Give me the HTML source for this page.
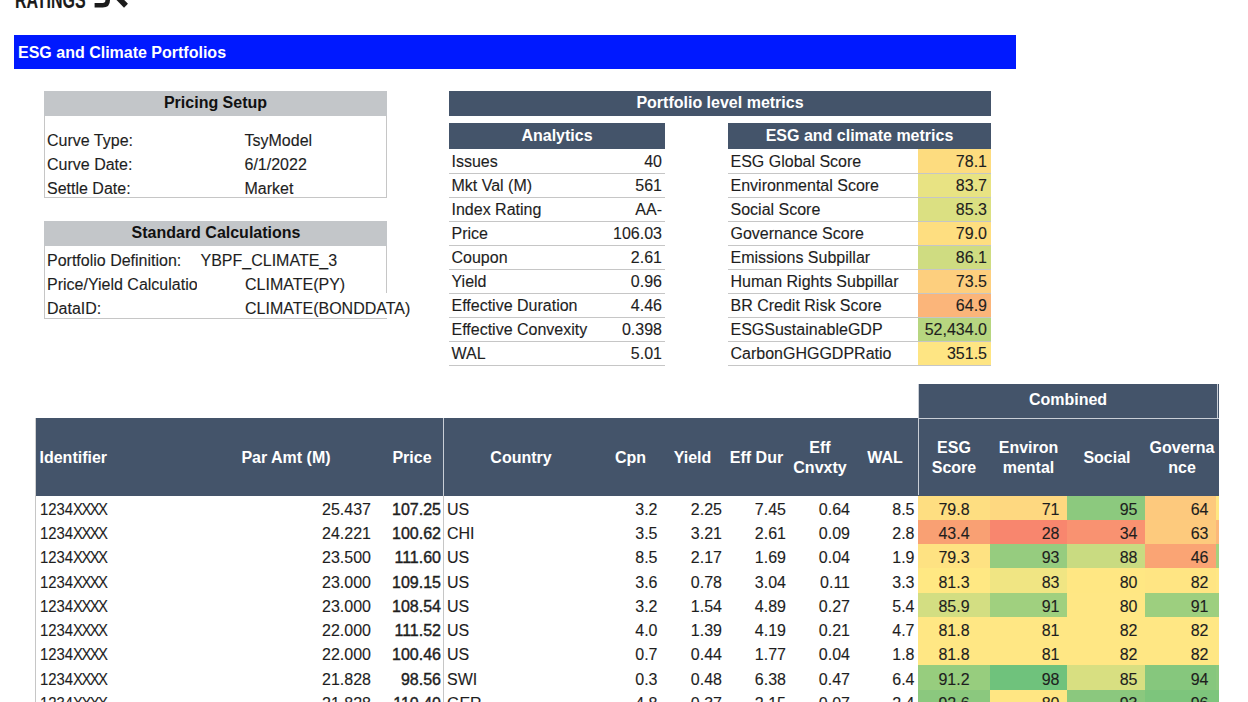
<!DOCTYPE html>
<html><head><meta charset="utf-8"><style>
html,body{margin:0;padding:0;background:#fff;}
body{width:1248px;height:702px;overflow:hidden;position:relative;font-family:"Liberation Sans",sans-serif;}
.t{position:absolute;white-space:nowrap;line-height:20px;-webkit-text-stroke:0.12px currentColor;}
.b{-webkit-text-stroke:0;}
.r{position:absolute;}
</style></head><body>
<div class="t" style="left:15px;top:-10px;font-size:24px;font-weight:700;color:#1b1b1b;transform:scaleX(0.665);transform-origin:0 0;line-height:20px;letter-spacing:0px">RATINGS</div>
<svg class="r" style="left:92px;top:-6px" width="40" height="16" viewBox="0 0 40 16"><path d="M15.7 0 L15.7 6.3 Q15.7 11.3 10.7 11.3 L2.6 11.3" fill="none" stroke="#1b1b1b" stroke-width="4.6"/><path d="M21.5 -1 L34 11.7" fill="none" stroke="#1b1b1b" stroke-width="5.5"/></svg>
<div class="r" style="left:14px;top:35px;width:1002px;height:34px;background:#0019ff;"></div>
<div class="t b" style="left:18px;top:43.00px;font-size:16px;font-weight:700;color:#fff;">ESG and Climate Portfolios</div>
<div class="r" style="left:44px;top:91px;width:343px;height:25px;background:#c3c6c9;"></div>
<div class="r" style="left:44px;top:116px;width:1px;height:82px;background:#c6c6c6;"></div>
<div class="r" style="left:386px;top:116px;width:1px;height:82px;background:#c6c6c6;"></div>
<div class="r" style="left:44px;top:197px;width:343px;height:1px;background:#c6c6c6;"></div>
<div class="t b" style="left:15.5px;width:400px;text-align:center;top:93.00px;font-size:16px;font-weight:700;color:#111;">Pricing Setup</div>
<div class="t" style="left:47px;top:131.00px;font-size:16px;font-weight:400;color:#1e1e1e;">Curve Type:</div>
<div class="t" style="left:244.5px;top:131.00px;font-size:16px;font-weight:400;color:#1e1e1e;">TsyModel</div>
<div class="t" style="left:47px;top:155.00px;font-size:16px;font-weight:400;color:#1e1e1e;">Curve Date:</div>
<div class="t" style="left:244.5px;top:155.00px;font-size:16px;font-weight:400;color:#1e1e1e;">6/1/2022</div>
<div class="t" style="left:47px;top:179.00px;font-size:16px;font-weight:400;color:#1e1e1e;">Settle Date:</div>
<div class="t" style="left:244.5px;top:179.00px;font-size:16px;font-weight:400;color:#1e1e1e;">Market</div>
<div class="r" style="left:44px;top:221px;width:343px;height:25px;background:#c3c6c9;"></div>
<div class="r" style="left:44px;top:246px;width:1px;height:73px;background:#c6c6c6;"></div>
<div class="r" style="left:386px;top:246px;width:1px;height:47px;background:#c6c6c6;"></div>
<div class="r" style="left:44px;top:318px;width:343px;height:1px;background:#c6c6c6;"></div>
<div class="t b" style="left:16px;width:400px;text-align:center;top:223.00px;font-size:16px;font-weight:700;color:#111;">Standard Calculations</div>
<div class="t" style="left:47px;top:251.00px;font-size:16px;font-weight:400;color:#1e1e1e;">Portfolio Definition:</div>
<div class="t" style="left:200.5px;top:251.00px;font-size:16px;font-weight:400;color:#1e1e1e;">YBPF_CLIMATE_3</div>
<div class="t" style="left:47px;top:275.00px;font-size:16px;font-weight:400;color:#1e1e1e;"><span style="display:inline-block;width:150px;overflow:hidden;white-space:nowrap;vertical-align:top">Price/Yield Calculation</span></div>
<div class="t" style="left:245px;top:275.00px;font-size:16px;font-weight:400;color:#1e1e1e;">CLIMATE(PY)</div>
<div class="t" style="left:47px;top:299.00px;font-size:16px;font-weight:400;color:#1e1e1e;">DataID:</div>
<div class="t" style="left:245px;top:299.00px;font-size:16px;font-weight:400;color:#1e1e1e;">CLIMATE(BONDDATA)</div>
<div class="r" style="left:449px;top:91px;width:542px;height:25px;background:#44546a;"></div>
<div class="t b" style="left:520px;width:400px;text-align:center;top:93.00px;font-size:16px;font-weight:700;color:#fff;">Portfolio level metrics</div>
<div class="r" style="left:449px;top:123px;width:216px;height:26px;background:#44546a;"></div>
<div class="t b" style="left:357px;width:400px;text-align:center;top:126.00px;font-size:16px;font-weight:700;color:#fff;">Analytics</div>
<div class="r" style="left:728px;top:123px;width:263px;height:26px;background:#44546a;"></div>
<div class="t b" style="left:659.5px;width:400px;text-align:center;top:126.00px;font-size:16px;font-weight:700;color:#fff;">ESG and climate metrics</div>
<div class="r" style="left:449px;top:173px;width:216px;height:1px;background:#c6c6c6;"></div>
<div class="t" style="left:451.5px;top:152.00px;font-size:16px;font-weight:400;color:#1e1e1e;">Issues</div>
<div class="t" style="left:262px;width:400px;text-align:right;top:152.00px;font-size:16px;font-weight:400;color:#1e1e1e;">40</div>
<div class="r" style="left:918px;top:149px;width:73px;height:24px;background:#fddc7f;"></div>
<div class="r" style="left:728px;top:173px;width:263px;height:1px;background:#c6c6c6;z-index:2"></div>
<div class="t" style="left:730.5px;top:152.00px;font-size:16px;font-weight:400;color:#1e1e1e;">ESG Global Score</div>
<div class="t" style="left:587px;width:400px;text-align:right;top:152.00px;font-size:16px;font-weight:400;color:#1e1e1e;">78.1</div>
<div class="r" style="left:449px;top:197px;width:216px;height:1px;background:#c6c6c6;"></div>
<div class="t" style="left:451.5px;top:176.00px;font-size:16px;font-weight:400;color:#1e1e1e;">Mkt Val (M)</div>
<div class="t" style="left:262px;width:400px;text-align:right;top:176.00px;font-size:16px;font-weight:400;color:#1e1e1e;">561</div>
<div class="r" style="left:918px;top:173px;width:73px;height:24px;background:#e8e383;"></div>
<div class="r" style="left:728px;top:197px;width:263px;height:1px;background:#c6c6c6;z-index:2"></div>
<div class="t" style="left:730.5px;top:176.00px;font-size:16px;font-weight:400;color:#1e1e1e;">Environmental Score</div>
<div class="t" style="left:587px;width:400px;text-align:right;top:176.00px;font-size:16px;font-weight:400;color:#1e1e1e;">83.7</div>
<div class="r" style="left:449px;top:221px;width:216px;height:1px;background:#c6c6c6;"></div>
<div class="t" style="left:451.5px;top:200.00px;font-size:16px;font-weight:400;color:#1e1e1e;">Index Rating</div>
<div class="t" style="left:262px;width:400px;text-align:right;top:200.00px;font-size:16px;font-weight:400;color:#1e1e1e;">AA-</div>
<div class="r" style="left:918px;top:197px;width:73px;height:24px;background:#dbe082;"></div>
<div class="r" style="left:728px;top:221px;width:263px;height:1px;background:#c6c6c6;z-index:2"></div>
<div class="t" style="left:730.5px;top:200.00px;font-size:16px;font-weight:400;color:#1e1e1e;">Social Score</div>
<div class="t" style="left:587px;width:400px;text-align:right;top:200.00px;font-size:16px;font-weight:400;color:#1e1e1e;">85.3</div>
<div class="r" style="left:449px;top:245px;width:216px;height:1px;background:#c6c6c6;"></div>
<div class="t" style="left:451.5px;top:224.00px;font-size:16px;font-weight:400;color:#1e1e1e;">Price</div>
<div class="t" style="left:262px;width:400px;text-align:right;top:224.00px;font-size:16px;font-weight:400;color:#1e1e1e;">106.03</div>
<div class="r" style="left:918px;top:221px;width:73px;height:24px;background:#fede80;"></div>
<div class="r" style="left:728px;top:245px;width:263px;height:1px;background:#c6c6c6;z-index:2"></div>
<div class="t" style="left:730.5px;top:224.00px;font-size:16px;font-weight:400;color:#1e1e1e;">Governance Score</div>
<div class="t" style="left:587px;width:400px;text-align:right;top:224.00px;font-size:16px;font-weight:400;color:#1e1e1e;">79.0</div>
<div class="r" style="left:449px;top:269px;width:216px;height:1px;background:#c6c6c6;"></div>
<div class="t" style="left:451.5px;top:248.00px;font-size:16px;font-weight:400;color:#1e1e1e;">Coupon</div>
<div class="t" style="left:262px;width:400px;text-align:right;top:248.00px;font-size:16px;font-weight:400;color:#1e1e1e;">2.61</div>
<div class="r" style="left:918px;top:245px;width:73px;height:24px;background:#cfdc81;"></div>
<div class="r" style="left:728px;top:269px;width:263px;height:1px;background:#c6c6c6;z-index:2"></div>
<div class="t" style="left:730.5px;top:248.00px;font-size:16px;font-weight:400;color:#1e1e1e;">Emissions Subpillar</div>
<div class="t" style="left:587px;width:400px;text-align:right;top:248.00px;font-size:16px;font-weight:400;color:#1e1e1e;">86.1</div>
<div class="r" style="left:449px;top:293px;width:216px;height:1px;background:#c6c6c6;"></div>
<div class="t" style="left:451.5px;top:272.00px;font-size:16px;font-weight:400;color:#1e1e1e;">Yield</div>
<div class="t" style="left:262px;width:400px;text-align:right;top:272.00px;font-size:16px;font-weight:400;color:#1e1e1e;">0.96</div>
<div class="r" style="left:918px;top:269px;width:73px;height:24px;background:#fdcf7e;"></div>
<div class="r" style="left:728px;top:293px;width:263px;height:1px;background:#c6c6c6;z-index:2"></div>
<div class="t" style="left:730.5px;top:272.00px;font-size:16px;font-weight:400;color:#1e1e1e;">Human Rights Subpillar</div>
<div class="t" style="left:587px;width:400px;text-align:right;top:272.00px;font-size:16px;font-weight:400;color:#1e1e1e;">73.5</div>
<div class="r" style="left:449px;top:317px;width:216px;height:1px;background:#c6c6c6;"></div>
<div class="t" style="left:451.5px;top:296.00px;font-size:16px;font-weight:400;color:#1e1e1e;">Effective Duration</div>
<div class="t" style="left:262px;width:400px;text-align:right;top:296.00px;font-size:16px;font-weight:400;color:#1e1e1e;">4.46</div>
<div class="r" style="left:918px;top:293px;width:73px;height:24px;background:#fbb57a;"></div>
<div class="r" style="left:728px;top:317px;width:263px;height:1px;background:#c6c6c6;z-index:2"></div>
<div class="t" style="left:730.5px;top:296.00px;font-size:16px;font-weight:400;color:#1e1e1e;">BR Credit Risk Score</div>
<div class="t" style="left:587px;width:400px;text-align:right;top:296.00px;font-size:16px;font-weight:400;color:#1e1e1e;">64.9</div>
<div class="r" style="left:449px;top:341px;width:216px;height:1px;background:#c6c6c6;"></div>
<div class="t" style="left:451.5px;top:320.00px;font-size:16px;font-weight:400;color:#1e1e1e;">Effective Convexity</div>
<div class="t" style="left:262px;width:400px;text-align:right;top:320.00px;font-size:16px;font-weight:400;color:#1e1e1e;">0.398</div>
<div class="r" style="left:918px;top:317px;width:73px;height:24px;background:#b7d680;"></div>
<div class="r" style="left:728px;top:341px;width:263px;height:1px;background:#c6c6c6;z-index:2"></div>
<div class="t" style="left:730.5px;top:320.00px;font-size:16px;font-weight:400;color:#1e1e1e;">ESGSustainableGDP</div>
<div class="t" style="left:587px;width:400px;text-align:right;top:320.00px;font-size:16px;font-weight:400;color:#1e1e1e;">52,434.0</div>
<div class="r" style="left:449px;top:365px;width:216px;height:1px;background:#c6c6c6;"></div>
<div class="t" style="left:451.5px;top:344.00px;font-size:16px;font-weight:400;color:#1e1e1e;">WAL</div>
<div class="t" style="left:262px;width:400px;text-align:right;top:344.00px;font-size:16px;font-weight:400;color:#1e1e1e;">5.01</div>
<div class="r" style="left:918px;top:341px;width:73px;height:24px;background:#fee583;"></div>
<div class="r" style="left:728px;top:365px;width:263px;height:1px;background:#c6c6c6;z-index:2"></div>
<div class="t" style="left:730.5px;top:344.00px;font-size:16px;font-weight:400;color:#1e1e1e;">CarbonGHGGDPRatio</div>
<div class="t" style="left:587px;width:400px;text-align:right;top:344.00px;font-size:16px;font-weight:400;color:#1e1e1e;">351.5</div>
<div class="r" style="left:918px;top:384px;width:301px;height:34px;background:#44546a;"></div>
<div class="t b" style="left:868px;width:400px;text-align:center;top:390.00px;font-size:16px;font-weight:700;color:#fff;">Combined</div>
<div class="r" style="left:36px;top:418px;width:1183px;height:77.5px;background:#44546a;"></div>
<div class="r" style="left:35px;top:418px;width:1px;height:78px;background:#d0d0d0;"></div>
<div class="r" style="left:918px;top:418px;width:301px;height:1px;background:#c9ced6;"></div>
<div class="r" style="left:918px;top:384px;width:1px;height:111px;background:#c9ced6;"></div>
<div class="r" style="left:1217px;top:384px;width:1px;height:34px;background:#c9ced6;"></div>
<div class="r" style="left:443px;top:418px;width:1px;height:77px;background:#c9ced6;"></div>
<div class="t b" style="left:39.5px;top:448.00px;font-size:16px;font-weight:700;color:#fff;">Identifier</div>
<div class="t b" style="left:86px;width:400px;text-align:center;top:448.00px;font-size:16px;font-weight:700;color:#fff;">Par Amt (M)</div>
<div class="t b" style="left:212px;width:400px;text-align:center;top:448.00px;font-size:16px;font-weight:700;color:#fff;">Price</div>
<div class="t b" style="left:321px;width:400px;text-align:center;top:448.00px;font-size:16px;font-weight:700;color:#fff;">Country</div>
<div class="t b" style="left:430.5px;width:400px;text-align:center;top:448.00px;font-size:16px;font-weight:700;color:#fff;">Cpn</div>
<div class="t b" style="left:492.5px;width:400px;text-align:center;top:448.00px;font-size:16px;font-weight:700;color:#fff;">Yield</div>
<div class="t b" style="left:556.5px;width:400px;text-align:center;top:448.00px;font-size:16px;font-weight:700;color:#fff;">Eff Dur</div>
<div class="t b" style="left:620px;width:400px;text-align:center;top:438.00px;font-size:16px;font-weight:700;color:#fff;">Eff</div>
<div class="t b" style="left:620px;width:400px;text-align:center;top:458.00px;font-size:16px;font-weight:700;color:#fff;">Cnvxty</div>
<div class="t b" style="left:685px;width:400px;text-align:center;top:448.00px;font-size:16px;font-weight:700;color:#fff;">WAL</div>
<div class="t b" style="left:754px;width:400px;text-align:center;top:438.00px;font-size:16px;font-weight:700;color:#fff;">ESG</div>
<div class="t b" style="left:754px;width:400px;text-align:center;top:458.00px;font-size:16px;font-weight:700;color:#fff;">Score</div>
<div class="t b" style="left:828.5px;width:400px;text-align:center;top:438.00px;font-size:16px;font-weight:700;color:#fff;">Environ</div>
<div class="t b" style="left:828.5px;width:400px;text-align:center;top:458.00px;font-size:16px;font-weight:700;color:#fff;">mental</div>
<div class="t b" style="left:907px;width:400px;text-align:center;top:448.00px;font-size:16px;font-weight:700;color:#fff;">Social</div>
<div class="t b" style="left:982px;width:400px;text-align:center;top:438.00px;font-size:16px;font-weight:700;color:#fff;">Governa</div>
<div class="t b" style="left:982px;width:400px;text-align:center;top:458.00px;font-size:16px;font-weight:700;color:#fff;">nce</div>
<div class="r" style="left:35px;top:495px;width:1px;height:210px;background:#c6c6c6;"></div>
<div class="r" style="left:443px;top:495px;width:1px;height:210px;background:#c6c6c6;"></div>
<div class="r" style="left:918px;top:495.50px;width:71.5px;height:24.25px;background:#fede81"></div>
<div class="r" style="left:989.5px;top:495.50px;width:77.5px;height:24.25px;background:#fed880"></div>
<div class="r" style="left:1067px;top:495.50px;width:78px;height:24.25px;background:#8cc97e"></div>
<div class="r" style="left:1145px;top:495.50px;width:71px;height:24.25px;background:#fdc97d"></div>
<div class="r" style="left:1216px;top:495.50px;width:3px;height:24.25px;background:#fee783"></div>
<div class="t" style="left:40px;top:500.00px;font-size:16px;font-weight:400;color:#1e1e1e;"><span style="display:inline-block;transform:scaleX(0.93);transform-origin:0 0">1234<span style="letter-spacing:-1.75px">XXXX</span></span></div>
<div class="t" style="left:-29px;width:400px;text-align:right;top:500.00px;font-size:16px;font-weight:400;color:#1e1e1e;">25.437</div>
<div class="t" style="left:41px;width:400px;text-align:right;top:500.00px;font-size:16px;font-weight:400;color:#1e1e1e;-webkit-text-stroke:0.4px currentColor">107.25</div>
<div class="t" style="left:447px;top:500.00px;font-size:16px;font-weight:400;color:#1e1e1e;">US</div>
<div class="t" style="left:257.5px;width:400px;text-align:right;top:500.00px;font-size:16px;font-weight:400;color:#1e1e1e;">3.2</div>
<div class="t" style="left:322px;width:400px;text-align:right;top:500.00px;font-size:16px;font-weight:400;color:#1e1e1e;">2.25</div>
<div class="t" style="left:386px;width:400px;text-align:right;top:500.00px;font-size:16px;font-weight:400;color:#1e1e1e;">7.45</div>
<div class="t" style="left:450px;width:400px;text-align:right;top:500.00px;font-size:16px;font-weight:400;color:#1e1e1e;">0.64</div>
<div class="t" style="left:514.5px;width:400px;text-align:right;top:500.00px;font-size:16px;font-weight:400;color:#1e1e1e;">8.5</div>
<div class="t" style="left:754px;width:400px;text-align:center;top:500.00px;font-size:16px;font-weight:400;color:#1e1e1e;">79.8</div>
<div class="t" style="left:659.5px;width:400px;text-align:right;top:500.00px;font-size:16px;font-weight:400;color:#1e1e1e;">71</div>
<div class="t" style="left:737.5px;width:400px;text-align:right;top:500.00px;font-size:16px;font-weight:400;color:#1e1e1e;">95</div>
<div class="t" style="left:808.5px;width:400px;text-align:right;top:500.00px;font-size:16px;font-weight:400;color:#1e1e1e;">64</div>
<div class="r" style="left:918px;top:519.75px;width:71.5px;height:24.25px;background:#f9a073"></div>
<div class="r" style="left:989.5px;top:519.75px;width:77.5px;height:24.25px;background:#f8866e"></div>
<div class="r" style="left:1067px;top:519.75px;width:78px;height:24.25px;background:#f99271"></div>
<div class="r" style="left:1145px;top:519.75px;width:71px;height:24.25px;background:#fdca7d"></div>
<div class="r" style="left:1216px;top:519.75px;width:3px;height:24.25px;background:#fcb87a"></div>
<div class="t" style="left:40px;top:524.00px;font-size:16px;font-weight:400;color:#1e1e1e;"><span style="display:inline-block;transform:scaleX(0.93);transform-origin:0 0">1234<span style="letter-spacing:-1.75px">XXXX</span></span></div>
<div class="t" style="left:-29px;width:400px;text-align:right;top:524.00px;font-size:16px;font-weight:400;color:#1e1e1e;">24.221</div>
<div class="t" style="left:41px;width:400px;text-align:right;top:524.00px;font-size:16px;font-weight:400;color:#1e1e1e;-webkit-text-stroke:0.4px currentColor">100.62</div>
<div class="t" style="left:447px;top:524.00px;font-size:16px;font-weight:400;color:#1e1e1e;">CHI</div>
<div class="t" style="left:257.5px;width:400px;text-align:right;top:524.00px;font-size:16px;font-weight:400;color:#1e1e1e;">3.5</div>
<div class="t" style="left:322px;width:400px;text-align:right;top:524.00px;font-size:16px;font-weight:400;color:#1e1e1e;">3.21</div>
<div class="t" style="left:386px;width:400px;text-align:right;top:524.00px;font-size:16px;font-weight:400;color:#1e1e1e;">2.61</div>
<div class="t" style="left:450px;width:400px;text-align:right;top:524.00px;font-size:16px;font-weight:400;color:#1e1e1e;">0.09</div>
<div class="t" style="left:514.5px;width:400px;text-align:right;top:524.00px;font-size:16px;font-weight:400;color:#1e1e1e;">2.8</div>
<div class="t" style="left:754px;width:400px;text-align:center;top:524.00px;font-size:16px;font-weight:400;color:#1e1e1e;">43.4</div>
<div class="t" style="left:659.5px;width:400px;text-align:right;top:524.00px;font-size:16px;font-weight:400;color:#1e1e1e;">28</div>
<div class="t" style="left:737.5px;width:400px;text-align:right;top:524.00px;font-size:16px;font-weight:400;color:#1e1e1e;">34</div>
<div class="t" style="left:808.5px;width:400px;text-align:right;top:524.00px;font-size:16px;font-weight:400;color:#1e1e1e;">63</div>
<div class="r" style="left:918px;top:544.00px;width:71.5px;height:24.25px;background:#fee282"></div>
<div class="r" style="left:989.5px;top:544.00px;width:77.5px;height:24.25px;background:#96cc7f"></div>
<div class="r" style="left:1067px;top:544.00px;width:78px;height:24.25px;background:#c9db81"></div>
<div class="r" style="left:1145px;top:544.00px;width:71px;height:24.25px;background:#faa474"></div>
<div class="r" style="left:1216px;top:544.00px;width:3px;height:24.25px;background:#a5d17f"></div>
<div class="t" style="left:40px;top:548.00px;font-size:16px;font-weight:400;color:#1e1e1e;"><span style="display:inline-block;transform:scaleX(0.93);transform-origin:0 0">1234<span style="letter-spacing:-1.75px">XXXX</span></span></div>
<div class="t" style="left:-29px;width:400px;text-align:right;top:548.00px;font-size:16px;font-weight:400;color:#1e1e1e;">23.500</div>
<div class="t" style="left:41px;width:400px;text-align:right;top:548.00px;font-size:16px;font-weight:400;color:#1e1e1e;-webkit-text-stroke:0.4px currentColor">111.60</div>
<div class="t" style="left:447px;top:548.00px;font-size:16px;font-weight:400;color:#1e1e1e;">US</div>
<div class="t" style="left:257.5px;width:400px;text-align:right;top:548.00px;font-size:16px;font-weight:400;color:#1e1e1e;">8.5</div>
<div class="t" style="left:322px;width:400px;text-align:right;top:548.00px;font-size:16px;font-weight:400;color:#1e1e1e;">2.17</div>
<div class="t" style="left:386px;width:400px;text-align:right;top:548.00px;font-size:16px;font-weight:400;color:#1e1e1e;">1.69</div>
<div class="t" style="left:450px;width:400px;text-align:right;top:548.00px;font-size:16px;font-weight:400;color:#1e1e1e;">0.04</div>
<div class="t" style="left:514.5px;width:400px;text-align:right;top:548.00px;font-size:16px;font-weight:400;color:#1e1e1e;">1.9</div>
<div class="t" style="left:754px;width:400px;text-align:center;top:548.00px;font-size:16px;font-weight:400;color:#1e1e1e;">79.3</div>
<div class="t" style="left:659.5px;width:400px;text-align:right;top:548.00px;font-size:16px;font-weight:400;color:#1e1e1e;">93</div>
<div class="t" style="left:737.5px;width:400px;text-align:right;top:548.00px;font-size:16px;font-weight:400;color:#1e1e1e;">88</div>
<div class="t" style="left:808.5px;width:400px;text-align:right;top:548.00px;font-size:16px;font-weight:400;color:#1e1e1e;">46</div>
<div class="r" style="left:918px;top:568.25px;width:71.5px;height:24.25px;background:#ffe883"></div>
<div class="r" style="left:989.5px;top:568.25px;width:77.5px;height:24.25px;background:#f0e583"></div>
<div class="r" style="left:1067px;top:568.25px;width:78px;height:24.25px;background:#ffe783"></div>
<div class="r" style="left:1145px;top:568.25px;width:71px;height:24.25px;background:#ffe583"></div>
<div class="r" style="left:1216px;top:568.25px;width:3px;height:24.25px;background:#ffe784"></div>
<div class="t" style="left:40px;top:573.00px;font-size:16px;font-weight:400;color:#1e1e1e;"><span style="display:inline-block;transform:scaleX(0.93);transform-origin:0 0">1234<span style="letter-spacing:-1.75px">XXXX</span></span></div>
<div class="t" style="left:-29px;width:400px;text-align:right;top:573.00px;font-size:16px;font-weight:400;color:#1e1e1e;">23.000</div>
<div class="t" style="left:41px;width:400px;text-align:right;top:573.00px;font-size:16px;font-weight:400;color:#1e1e1e;-webkit-text-stroke:0.4px currentColor">109.15</div>
<div class="t" style="left:447px;top:573.00px;font-size:16px;font-weight:400;color:#1e1e1e;">US</div>
<div class="t" style="left:257.5px;width:400px;text-align:right;top:573.00px;font-size:16px;font-weight:400;color:#1e1e1e;">3.6</div>
<div class="t" style="left:322px;width:400px;text-align:right;top:573.00px;font-size:16px;font-weight:400;color:#1e1e1e;">0.78</div>
<div class="t" style="left:386px;width:400px;text-align:right;top:573.00px;font-size:16px;font-weight:400;color:#1e1e1e;">3.04</div>
<div class="t" style="left:450px;width:400px;text-align:right;top:573.00px;font-size:16px;font-weight:400;color:#1e1e1e;">0.11</div>
<div class="t" style="left:514.5px;width:400px;text-align:right;top:573.00px;font-size:16px;font-weight:400;color:#1e1e1e;">3.3</div>
<div class="t" style="left:754px;width:400px;text-align:center;top:573.00px;font-size:16px;font-weight:400;color:#1e1e1e;">81.3</div>
<div class="t" style="left:659.5px;width:400px;text-align:right;top:573.00px;font-size:16px;font-weight:400;color:#1e1e1e;">83</div>
<div class="t" style="left:737.5px;width:400px;text-align:right;top:573.00px;font-size:16px;font-weight:400;color:#1e1e1e;">80</div>
<div class="t" style="left:808.5px;width:400px;text-align:right;top:573.00px;font-size:16px;font-weight:400;color:#1e1e1e;">82</div>
<div class="r" style="left:918px;top:592.50px;width:71.5px;height:24.25px;background:#d3de82"></div>
<div class="r" style="left:989.5px;top:592.50px;width:77.5px;height:24.25px;background:#a0d07f"></div>
<div class="r" style="left:1067px;top:592.50px;width:78px;height:24.25px;background:#ffe784"></div>
<div class="r" style="left:1145px;top:592.50px;width:71px;height:24.25px;background:#9dcf7f"></div>
<div class="r" style="left:1216px;top:592.50px;width:3px;height:24.25px;background:#9ecf7f"></div>
<div class="t" style="left:40px;top:597.00px;font-size:16px;font-weight:400;color:#1e1e1e;"><span style="display:inline-block;transform:scaleX(0.93);transform-origin:0 0">1234<span style="letter-spacing:-1.75px">XXXX</span></span></div>
<div class="t" style="left:-29px;width:400px;text-align:right;top:597.00px;font-size:16px;font-weight:400;color:#1e1e1e;">23.000</div>
<div class="t" style="left:41px;width:400px;text-align:right;top:597.00px;font-size:16px;font-weight:400;color:#1e1e1e;-webkit-text-stroke:0.4px currentColor">108.54</div>
<div class="t" style="left:447px;top:597.00px;font-size:16px;font-weight:400;color:#1e1e1e;">US</div>
<div class="t" style="left:257.5px;width:400px;text-align:right;top:597.00px;font-size:16px;font-weight:400;color:#1e1e1e;">3.2</div>
<div class="t" style="left:322px;width:400px;text-align:right;top:597.00px;font-size:16px;font-weight:400;color:#1e1e1e;">1.54</div>
<div class="t" style="left:386px;width:400px;text-align:right;top:597.00px;font-size:16px;font-weight:400;color:#1e1e1e;">4.89</div>
<div class="t" style="left:450px;width:400px;text-align:right;top:597.00px;font-size:16px;font-weight:400;color:#1e1e1e;">0.27</div>
<div class="t" style="left:514.5px;width:400px;text-align:right;top:597.00px;font-size:16px;font-weight:400;color:#1e1e1e;">5.4</div>
<div class="t" style="left:754px;width:400px;text-align:center;top:597.00px;font-size:16px;font-weight:400;color:#1e1e1e;">85.9</div>
<div class="t" style="left:659.5px;width:400px;text-align:right;top:597.00px;font-size:16px;font-weight:400;color:#1e1e1e;">91</div>
<div class="t" style="left:737.5px;width:400px;text-align:right;top:597.00px;font-size:16px;font-weight:400;color:#1e1e1e;">80</div>
<div class="t" style="left:808.5px;width:400px;text-align:right;top:597.00px;font-size:16px;font-weight:400;color:#1e1e1e;">91</div>
<div class="r" style="left:918px;top:616.75px;width:71.5px;height:24.25px;background:#ffe784"></div>
<div class="r" style="left:989.5px;top:616.75px;width:77.5px;height:24.25px;background:#ffe784"></div>
<div class="r" style="left:1067px;top:616.75px;width:78px;height:24.25px;background:#ffe784"></div>
<div class="r" style="left:1145px;top:616.75px;width:71px;height:24.25px;background:#ffe784"></div>
<div class="r" style="left:1216px;top:616.75px;width:3px;height:24.25px;background:#ffe784"></div>
<div class="t" style="left:40px;top:621.00px;font-size:16px;font-weight:400;color:#1e1e1e;"><span style="display:inline-block;transform:scaleX(0.93);transform-origin:0 0">1234<span style="letter-spacing:-1.75px">XXXX</span></span></div>
<div class="t" style="left:-29px;width:400px;text-align:right;top:621.00px;font-size:16px;font-weight:400;color:#1e1e1e;">22.000</div>
<div class="t" style="left:41px;width:400px;text-align:right;top:621.00px;font-size:16px;font-weight:400;color:#1e1e1e;-webkit-text-stroke:0.4px currentColor">111.52</div>
<div class="t" style="left:447px;top:621.00px;font-size:16px;font-weight:400;color:#1e1e1e;">US</div>
<div class="t" style="left:257.5px;width:400px;text-align:right;top:621.00px;font-size:16px;font-weight:400;color:#1e1e1e;">4.0</div>
<div class="t" style="left:322px;width:400px;text-align:right;top:621.00px;font-size:16px;font-weight:400;color:#1e1e1e;">1.39</div>
<div class="t" style="left:386px;width:400px;text-align:right;top:621.00px;font-size:16px;font-weight:400;color:#1e1e1e;">4.19</div>
<div class="t" style="left:450px;width:400px;text-align:right;top:621.00px;font-size:16px;font-weight:400;color:#1e1e1e;">0.21</div>
<div class="t" style="left:514.5px;width:400px;text-align:right;top:621.00px;font-size:16px;font-weight:400;color:#1e1e1e;">4.7</div>
<div class="t" style="left:754px;width:400px;text-align:center;top:621.00px;font-size:16px;font-weight:400;color:#1e1e1e;">81.8</div>
<div class="t" style="left:659.5px;width:400px;text-align:right;top:621.00px;font-size:16px;font-weight:400;color:#1e1e1e;">81</div>
<div class="t" style="left:737.5px;width:400px;text-align:right;top:621.00px;font-size:16px;font-weight:400;color:#1e1e1e;">82</div>
<div class="t" style="left:808.5px;width:400px;text-align:right;top:621.00px;font-size:16px;font-weight:400;color:#1e1e1e;">82</div>
<div class="r" style="left:918px;top:641.00px;width:71.5px;height:24.25px;background:#ffe784"></div>
<div class="r" style="left:989.5px;top:641.00px;width:77.5px;height:24.25px;background:#ffe784"></div>
<div class="r" style="left:1067px;top:641.00px;width:78px;height:24.25px;background:#ffe784"></div>
<div class="r" style="left:1145px;top:641.00px;width:71px;height:24.25px;background:#ffe784"></div>
<div class="r" style="left:1216px;top:641.00px;width:3px;height:24.25px;background:#ffe784"></div>
<div class="t" style="left:40px;top:645.00px;font-size:16px;font-weight:400;color:#1e1e1e;"><span style="display:inline-block;transform:scaleX(0.93);transform-origin:0 0">1234<span style="letter-spacing:-1.75px">XXXX</span></span></div>
<div class="t" style="left:-29px;width:400px;text-align:right;top:645.00px;font-size:16px;font-weight:400;color:#1e1e1e;">22.000</div>
<div class="t" style="left:41px;width:400px;text-align:right;top:645.00px;font-size:16px;font-weight:400;color:#1e1e1e;-webkit-text-stroke:0.4px currentColor">100.46</div>
<div class="t" style="left:447px;top:645.00px;font-size:16px;font-weight:400;color:#1e1e1e;">US</div>
<div class="t" style="left:257.5px;width:400px;text-align:right;top:645.00px;font-size:16px;font-weight:400;color:#1e1e1e;">0.7</div>
<div class="t" style="left:322px;width:400px;text-align:right;top:645.00px;font-size:16px;font-weight:400;color:#1e1e1e;">0.44</div>
<div class="t" style="left:386px;width:400px;text-align:right;top:645.00px;font-size:16px;font-weight:400;color:#1e1e1e;">1.77</div>
<div class="t" style="left:450px;width:400px;text-align:right;top:645.00px;font-size:16px;font-weight:400;color:#1e1e1e;">0.04</div>
<div class="t" style="left:514.5px;width:400px;text-align:right;top:645.00px;font-size:16px;font-weight:400;color:#1e1e1e;">1.8</div>
<div class="t" style="left:754px;width:400px;text-align:center;top:645.00px;font-size:16px;font-weight:400;color:#1e1e1e;">81.8</div>
<div class="t" style="left:659.5px;width:400px;text-align:right;top:645.00px;font-size:16px;font-weight:400;color:#1e1e1e;">81</div>
<div class="t" style="left:737.5px;width:400px;text-align:right;top:645.00px;font-size:16px;font-weight:400;color:#1e1e1e;">82</div>
<div class="t" style="left:808.5px;width:400px;text-align:right;top:645.00px;font-size:16px;font-weight:400;color:#1e1e1e;">82</div>
<div class="r" style="left:918px;top:665.25px;width:71.5px;height:24.25px;background:#97cd7e"></div>
<div class="r" style="left:989.5px;top:665.25px;width:77.5px;height:24.25px;background:#6fc27c"></div>
<div class="r" style="left:1067px;top:665.25px;width:78px;height:24.25px;background:#d8df81"></div>
<div class="r" style="left:1145px;top:665.25px;width:71px;height:24.25px;background:#86c77d"></div>
<div class="r" style="left:1216px;top:665.25px;width:3px;height:24.25px;background:#8bc87e"></div>
<div class="t" style="left:40px;top:670.00px;font-size:16px;font-weight:400;color:#1e1e1e;"><span style="display:inline-block;transform:scaleX(0.93);transform-origin:0 0">1234<span style="letter-spacing:-1.75px">XXXX</span></span></div>
<div class="t" style="left:-29px;width:400px;text-align:right;top:670.00px;font-size:16px;font-weight:400;color:#1e1e1e;">21.828</div>
<div class="t" style="left:41px;width:400px;text-align:right;top:670.00px;font-size:16px;font-weight:400;color:#1e1e1e;-webkit-text-stroke:0.4px currentColor">98.56</div>
<div class="t" style="left:447px;top:670.00px;font-size:16px;font-weight:400;color:#1e1e1e;">SWI</div>
<div class="t" style="left:257.5px;width:400px;text-align:right;top:670.00px;font-size:16px;font-weight:400;color:#1e1e1e;">0.3</div>
<div class="t" style="left:322px;width:400px;text-align:right;top:670.00px;font-size:16px;font-weight:400;color:#1e1e1e;">0.48</div>
<div class="t" style="left:386px;width:400px;text-align:right;top:670.00px;font-size:16px;font-weight:400;color:#1e1e1e;">6.38</div>
<div class="t" style="left:450px;width:400px;text-align:right;top:670.00px;font-size:16px;font-weight:400;color:#1e1e1e;">0.47</div>
<div class="t" style="left:514.5px;width:400px;text-align:right;top:670.00px;font-size:16px;font-weight:400;color:#1e1e1e;">6.4</div>
<div class="t" style="left:754px;width:400px;text-align:center;top:670.00px;font-size:16px;font-weight:400;color:#1e1e1e;">91.2</div>
<div class="t" style="left:659.5px;width:400px;text-align:right;top:670.00px;font-size:16px;font-weight:400;color:#1e1e1e;">98</div>
<div class="t" style="left:737.5px;width:400px;text-align:right;top:670.00px;font-size:16px;font-weight:400;color:#1e1e1e;">85</div>
<div class="t" style="left:808.5px;width:400px;text-align:right;top:670.00px;font-size:16px;font-weight:400;color:#1e1e1e;">94</div>
<div class="r" style="left:918px;top:689.50px;width:71.5px;height:24.25px;background:#8bc87e"></div>
<div class="r" style="left:989.5px;top:689.50px;width:77.5px;height:24.25px;background:#ffe683"></div>
<div class="r" style="left:1067px;top:689.50px;width:78px;height:24.25px;background:#8bc87e"></div>
<div class="r" style="left:1145px;top:689.50px;width:71px;height:24.25px;background:#7dc57c"></div>
<div class="r" style="left:1216px;top:689.50px;width:3px;height:24.25px;background:#7dc57c"></div>
<div class="t" style="left:40px;top:694.00px;font-size:16px;font-weight:400;color:#1e1e1e;"><span style="display:inline-block;transform:scaleX(0.93);transform-origin:0 0">1234<span style="letter-spacing:-1.75px">XXXX</span></span></div>
<div class="t" style="left:-29px;width:400px;text-align:right;top:694.00px;font-size:16px;font-weight:400;color:#1e1e1e;">21.828</div>
<div class="t" style="left:41px;width:400px;text-align:right;top:694.00px;font-size:16px;font-weight:400;color:#1e1e1e;-webkit-text-stroke:0.4px currentColor">110.40</div>
<div class="t" style="left:447px;top:694.00px;font-size:16px;font-weight:400;color:#1e1e1e;">GER</div>
<div class="t" style="left:257.5px;width:400px;text-align:right;top:694.00px;font-size:16px;font-weight:400;color:#1e1e1e;">4.8</div>
<div class="t" style="left:322px;width:400px;text-align:right;top:694.00px;font-size:16px;font-weight:400;color:#1e1e1e;">0.37</div>
<div class="t" style="left:386px;width:400px;text-align:right;top:694.00px;font-size:16px;font-weight:400;color:#1e1e1e;">2.15</div>
<div class="t" style="left:450px;width:400px;text-align:right;top:694.00px;font-size:16px;font-weight:400;color:#1e1e1e;">0.07</div>
<div class="t" style="left:514.5px;width:400px;text-align:right;top:694.00px;font-size:16px;font-weight:400;color:#1e1e1e;">2.4</div>
<div class="t" style="left:754px;width:400px;text-align:center;top:694.00px;font-size:16px;font-weight:400;color:#1e1e1e;">92.6</div>
<div class="t" style="left:659.5px;width:400px;text-align:right;top:694.00px;font-size:16px;font-weight:400;color:#1e1e1e;">80</div>
<div class="t" style="left:737.5px;width:400px;text-align:right;top:694.00px;font-size:16px;font-weight:400;color:#1e1e1e;">93</div>
<div class="t" style="left:808.5px;width:400px;text-align:right;top:694.00px;font-size:16px;font-weight:400;color:#1e1e1e;">96</div>
</body></html>
